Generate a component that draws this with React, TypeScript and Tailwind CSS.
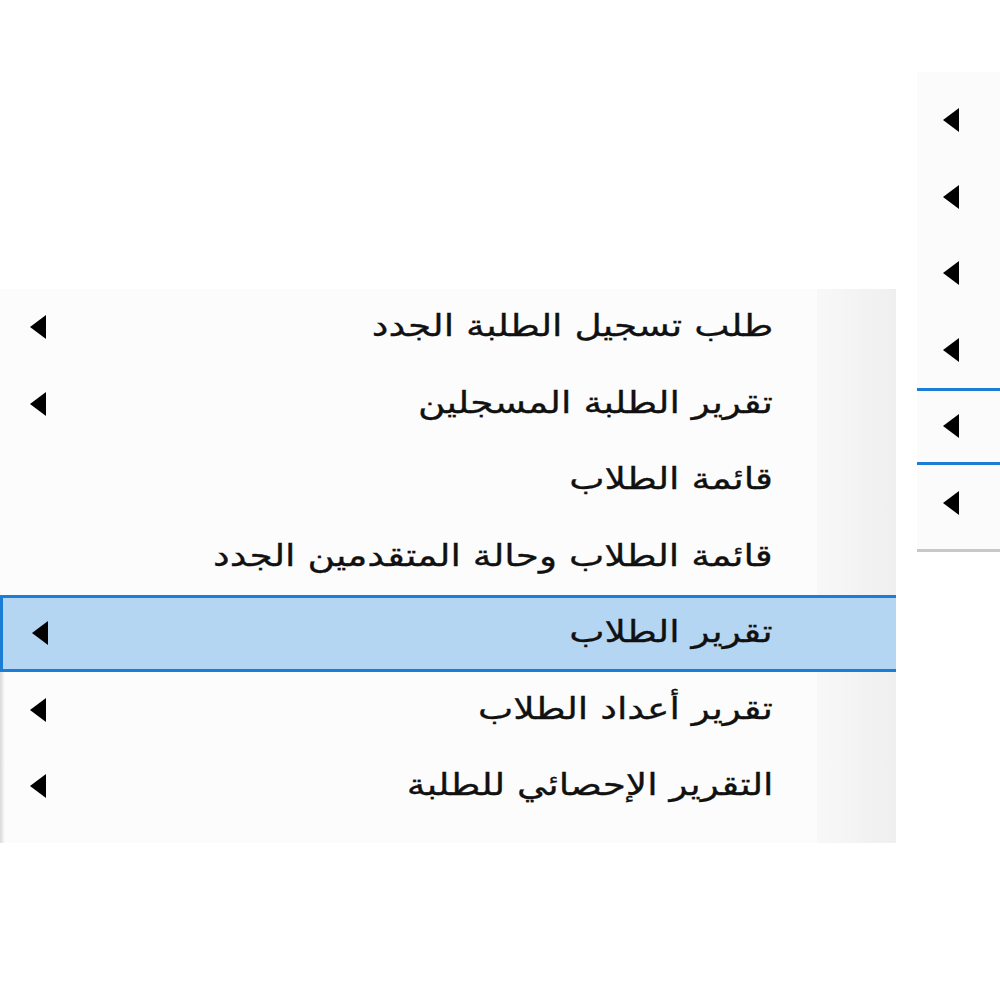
import React from 'react';

type Item = { label: string; sub: boolean; active?: boolean };

const items: Item[] = [
    { label: 'طلب تسجيل الطلبة الجدد', sub: true },
    { label: 'تقرير الطلبة المسجلين', sub: true },
    { label: 'قائمة الطلاب', sub: false },
    { label: 'قائمة الطلاب وحالة المتقدمين الجدد', sub: false },
    { label: 'تقرير الطلاب', sub: true, active: true },
    { label: 'تقرير أعداد الطلاب', sub: true },
    { label: 'التقرير الإحصائي للطلبة', sub: true },
];

const Arrow = () => (
    <svg width="16" height="24" viewBox="0 0 16 24" className="block">
        <path d="M16 0 L16 24 L0 12 Z" fill="#000" />
    </svg>
);

const MenuRow: React.FC<{ item: Item }> = ({ item }) => (
    <div
        className={`relative flex h-[76.5px] items-center ${
            item.active ? 'bg-[#b5d6f2] border-y-[3px] border-l-[3px] border-[#1c7dd6]' : ''
        }`}
    >
        <div className="w-[123px] h-full shrink-0" />
        <div className="flex-1">
            <span className="inline-block origin-right scale-x-[1.25] text-[30px] leading-none text-[#111] whitespace-nowrap [-webkit-text-stroke:0.3px_#111]">
                {item.label}
            </span>
        </div>
        <div className={`w-[76px] flex justify-center ${item.active ? 'pr-[3px]' : ''}`}>
            {item.sub ? <Arrow /> : null}
        </div>
    </div>
);

const App: React.FC = () => {
    return (
        <div className="w-[1000px] h-[1000px] bg-white relative overflow-hidden" style={{ fontFamily: '"DejaVu Sans", Tahoma, sans-serif' }}>
            {/* parent menu, cut off at the right edge */}
            <div className="absolute left-[917px] top-[72px] w-[100px] h-[480px] bg-[#fbfbfb] border-b-[3px] border-[#c8c8c8] pt-[10px]">
                {[0, 1, 2, 3, 4, 5].map(i => (
                    <div
                        key={i}
                        className={`h-[76.5px] flex items-center pl-[26px] ${i === 4 ? 'border-y-[3px] border-[#1c7dd6]' : ''}`}
                    >
                        <Arrow />
                    </div>
                ))}
            </div>

            {/* submenu */}
            <div dir="rtl" className="absolute left-0 top-[289px] w-[896px] h-[554px] bg-[#fcfcfc]">
                <div className="absolute right-0 top-0 bottom-0 w-[79px] bg-gradient-to-r from-[#f8f8f8] to-[#efefef]" />
                <div className="absolute left-0 top-[379px] bottom-0 w-[5px] bg-gradient-to-r from-[#d9d9d9] to-[#fcfcfc]" />
                <div className="relative">
                    {items.map(item => (
                        <MenuRow key={item.label} item={item} />
                    ))}
                </div>
            </div>
        </div>
    );
};

export default App;
